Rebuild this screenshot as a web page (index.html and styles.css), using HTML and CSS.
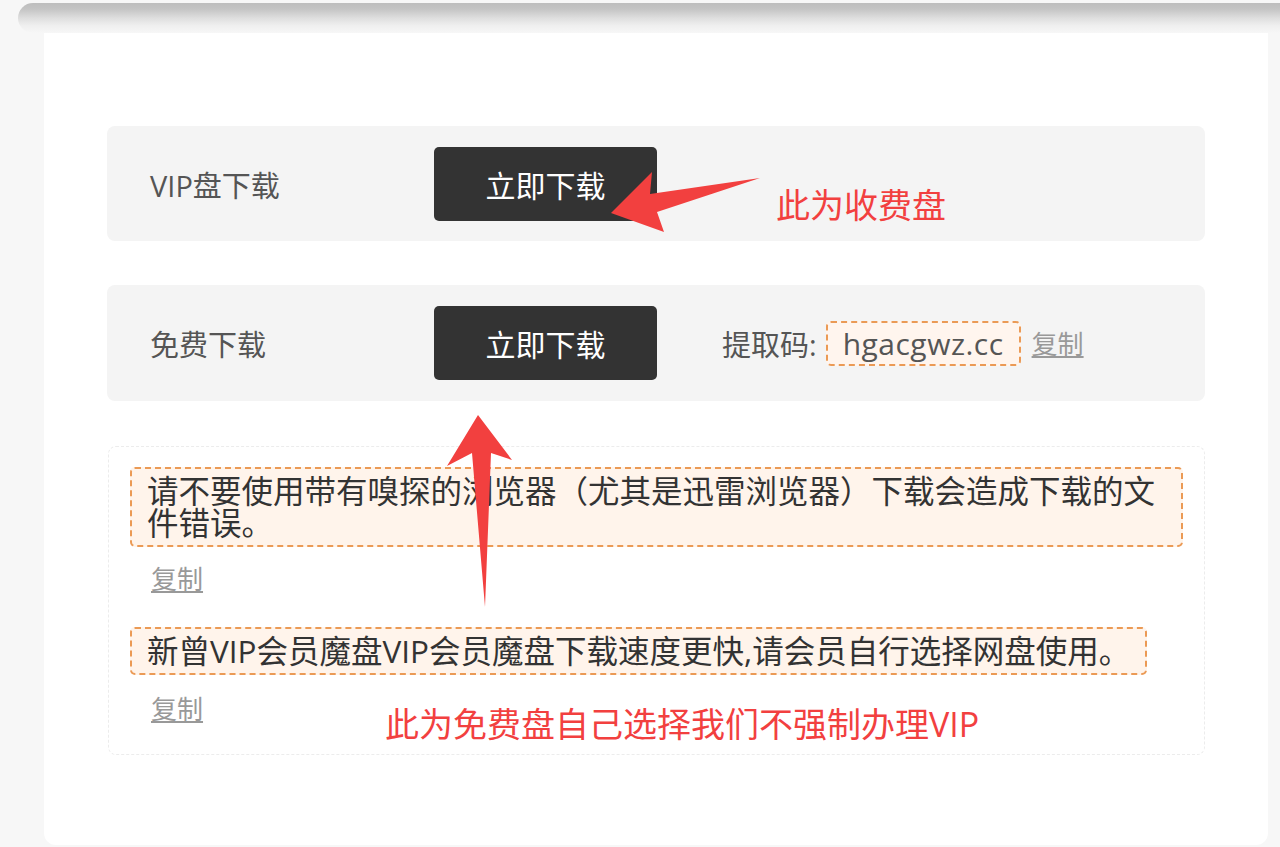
FILE: index.html
```html
<!DOCTYPE html>
<html lang="zh-CN">
<head>
<meta charset="utf-8">
<title>下载</title>
<link rel="stylesheet" href="styles.css">
</head>
<body>
<div class="page">
  <div class="topbar"></div>
  <div class="card">
    <div class="row">
      <div class="label">VIP盘下载</div>
      <a class="btn">立即下载</a>
    </div>
    <div class="row row-free">
      <div class="label">免费下载</div>
      <a class="btn">立即下载</a>
      <span class="code-label">提取码:</span>
      <span class="code">hgacgwz.cc</span>
      <a class="copy">复制</a>
    </div>
    <div class="notes">
      <div class="item">
        <div class="note">请不要使用带有嗅探的浏览器（尤其是迅雷浏览器）下载会造成下载的文件错误。</div>
        <div class="copy-line"><a class="copy">复制</a></div>
      </div>
      <div class="item">
        <div class="note">新曾VIP会员魔盘VIP会员魔盘下载速度更快,请会员自行选择网盘使用。</div>
        <div class="copy-line"><a class="copy">复制</a></div>
      </div>
    </div>
  </div>

  <svg class="arrows" width="1280" height="847" viewBox="0 0 1280 847">
    <polygon fill="#f2403f" points="611,213 652,172 650,194 760,178 657,212 664,232"/>
    <polygon fill="#f2403f" points="478,415 512,460 491,453 485,607 472,453 447,466"/>
  </svg>
  <div class="annot annot-1">此为收费盘</div>
  <div class="annot annot-2">此为免费盘自己选择我们不强制办理VIP</div>
</div>
</body>
</html>
```

FILE: styles.css
```css
* { box-sizing: border-box; }

html, body {
  margin: 0;
  padding: 0;
  background: #f7f7f7;
}

body {
  font-family: "Open Sans", "Noto Sans CJK SC", sans-serif;
  color: #555;
}

.page {
  position: relative;
  width: 1280px;
  height: 847px;
  overflow: hidden;
}

.topbar {
  height: 30px;
  margin: 3px 0 0 18px;
  border-radius: 15px 0 0 15px;
  background: linear-gradient(to bottom, #bdbdbd 0%, #c4c4c4 20%, #dedede 50%, #efefef 75%, #f7f7f7 100%);
}

.card {
  margin: 0 12px 0 44px;
  height: 812px;
  background: #fff;
  border-radius: 0 0 12px 12px;
  padding: 93px 63px 0 63px;
}

.row {
  display: flex;
  align-items: center;
  height: 115px;
  padding-left: 43px;
  background: #f4f4f4;
  border-radius: 8px;
  margin-bottom: 44px;
}

.row-free {
  height: 116px;
  margin-bottom: 45px;
}

.label {
  width: 284px;
  font-size: 29px;
  color: #555;
}

.btn {
  display: flex;
  align-items: center;
  justify-content: center;
  width: 223px;
  height: 74px;
  background: #333;
  color: #fff;
  border-radius: 5px;
  font-size: 30px;
}

.code-label {
  margin-left: 65px;
  font-size: 29px;
  color: #555;
}

.code {
  display: flex;
  align-items: center;
  height: 45px;
  margin-left: 9px;
  padding: 0 15px;
  border: 2px dashed #eb9a55;
  border-radius: 5px;
  background: #fff5ee;
  font-size: 30px;
  letter-spacing: 0.5px;
  color: #555;
}

.copy {
  font-size: 26px;
  color: #999;
  text-decoration: underline;
}

.row-free .copy {
  margin-left: 11px;
}

.notes {
  border: 1px dashed #ececec;
  border-radius: 8px;
  padding: 20px 21px 25px 21px;
  margin-left: 1px;
}

.item + .item {
  margin-top: 28px;
}

.note {
  display: inline-block;
  padding: 6px 15px;
  border: 2px dashed #eb9a55;
  border-radius: 5px;
  background: #fff4eb;
  font-size: 31.5px;
  line-height: 32px;
  color: #333;
}

.copy-line {
  margin-top: 12px;
  height: 40px;
  line-height: 40px;
  padding-left: 21px;
}

.item + .item .copy-line {
  margin-top: 14px;
}

.arrows {
  position: absolute;
  left: 0;
  top: 0;
  pointer-events: none;
}

.annot {
  position: absolute;
  color: #f2403f;
  line-height: 1;
  white-space: nowrap;
}

.annot-1 {
  left: 776px;
  top: 188px;
  font-size: 34px;
}

.annot-2 {
  left: 385px;
  top: 707px;
  font-size: 34px;
}
```
